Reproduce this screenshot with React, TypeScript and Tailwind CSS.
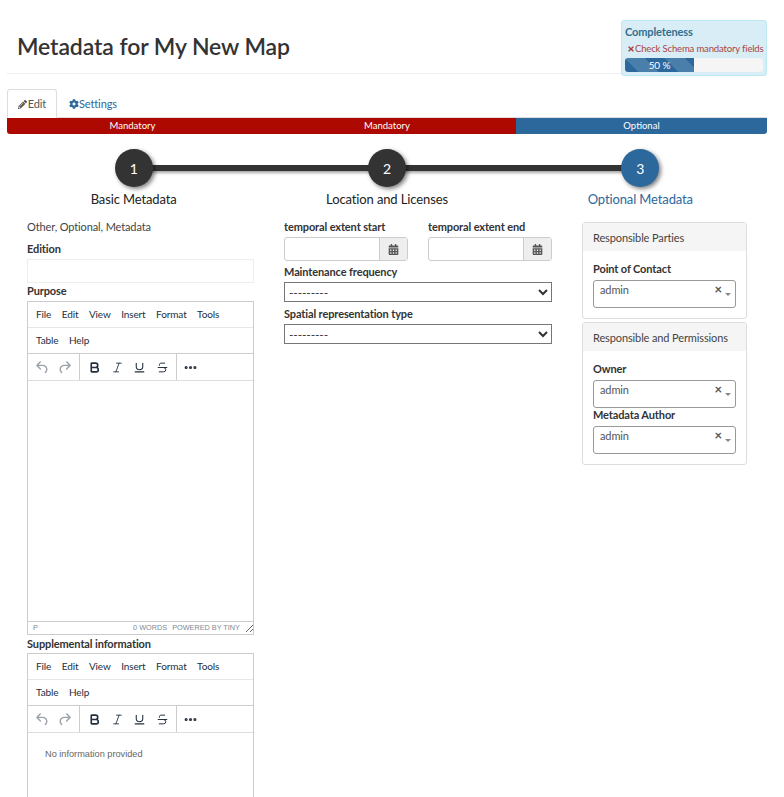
import React from "react";
import { Bold, Italic, Underline, Strikethrough, Ellipsis } from "lucide-react";
import { FaPencilAlt, FaCog, FaCalendarAlt, FaTimes } from "react-icons/fa";

const undoPath =
  "M6.4 8H12c3.7 0 6.2 2 6.8 5.1.6 2.7-.4 5.6-2.3 6.8a1 1 0 0 1-1-1.8c1.1-.6 1.8-2.7 1.4-4.6-.5-2.1-2.1-3.5-4.9-3.5H6.4l3.3 3.3a1 1 0 1 1-1.4 1.4l-5-5a1 1 0 0 1 0-1.4l5-5a1 1 0 0 1 1.4 1.4L6.4 8z";

function Editor({ children, bodyClass }: { children?: React.ReactNode; bodyClass: string }) {
  return (
    <div className="border border-[#ccc] bg-white">
      <div className="flex h-[26px] items-center gap-[10.5px] border-b border-[#e6e6e6] pl-[8px] text-[10px] text-[#222f3e]">
        {["File", "Edit", "View", "Insert", "Format", "Tools"].map((m) => (
          <span key={m}>{m}</span>
        ))}
      </div>
      <div className="flex h-[26px] items-center gap-[10.5px] border-b border-[#ccc] pl-[8px] text-[10px] text-[#222f3e]">
        <span>Table</span>
        <span>Help</span>
      </div>
      <div className="flex h-[27px] items-center border-b border-[#ddd]">
        <div className="flex h-full w-[52px] items-center gap-[5px] border-r border-[#ccc] pl-[6px] text-[#9aa1a9]">
          <svg width="17" height="17" viewBox="0 0 24 24" fill="currentColor">
            <path d={undoPath} />
          </svg>
          <svg width="17" height="17" viewBox="0 0 24 24" fill="currentColor" className="-scale-x-100">
            <path d={undoPath} />
          </svg>
        </div>
        <div className="flex h-full w-[97px] items-center gap-[9.5px] border-r border-[#ccc] pl-[8px] text-[#222f3e]">
          <Bold size={13} strokeWidth={3} />
          <Italic size={13} strokeWidth={1.6} />
          <Underline size={13} strokeWidth={2} />
          <Strikethrough size={13} strokeWidth={1.8} />
        </div>
        <div className="pl-[6px] text-[#222f3e]">
          <Ellipsis size={15} strokeWidth={3} />
        </div>
      </div>
      <div className={bodyClass}>{children}</div>
    </div>
  );
}

function Owner({ label, className }: { label: string; className?: string }) {
  return (
    <div className={className}>
      <div className="mb-[3px] text-[11px] leading-[16px] font-bold tracking-[-0.12px] text-[#333]">{label}</div>
      <div className="relative h-[28px] rounded-[3px] border border-[#999] pl-[6px] text-[11px] leading-[17px] tracking-[-0.12px] text-[#555]">
        admin
        <span className="absolute right-[13px] top-[1px] text-[13px] leading-[15px] font-bold text-[#555]">×</span>
        <span className="absolute right-[4px] top-[12px] h-0 w-0 border-x-[3px] border-t-[3px] border-x-transparent border-t-[#888]" />
      </div>
    </div>
  );
}

function DateInput({ label, className }: { label: string; className: string }) {
  return (
    <div className={className}>
      <div className="mb-[2px] text-[11px] leading-[17px] font-bold tracking-[-0.12px] text-[#333]">{label}</div>
      <div className="flex h-[24px] rounded-[3px] border border-[#ccc]">
        <div className="grow" />
        <div className="flex w-[28px] items-center justify-center border-l border-[#ccc] bg-[#eee] text-[#555]">
          <FaCalendarAlt size={11} />
        </div>
      </div>
    </div>
  );
}

function Dropdown({ label }: { label: string }) {
  return (
    <div>
      <div className="mb-[2px] text-[11px] leading-[17px] font-bold tracking-[-0.12px] text-[#333]">{label}</div>
      <select className="mb-[3px] block h-[20px] w-full border border-[#767676] bg-white text-[12px] text-[#333]">
        <option>---------</option>
      </select>
    </div>
  );
}

export default function App() {
  return (
    <div className="h-[797px] w-[784px] overflow-hidden bg-white px-[7px] font-['Lato','Liberation_Sans',sans-serif] text-[11px] tracking-[-0.12px] text-[#333]">
      <div className="w-[760px]">
        <div className="flex h-[74px] items-start justify-between border-b border-[#eee]">
          <h1 className="pl-[10px] pt-[31px] text-[23px] leading-[30px] font-semibold tracking-[-0.1px] text-[#333]">Metadata for My New Map</h1>
          <div className="mt-[20px] h-[56px] w-[146px] rounded-[3px] border border-[#bce8f1] bg-[#d9edf7] px-[3px] pt-[3px]">
            <div className="text-[11px] leading-[15px] font-bold text-[#31708f]">Completeness</div>
            <div className="mt-[3px] flex items-center pl-[2px] text-[9.5px] leading-[14px] tracking-[-0.15px] whitespace-nowrap text-[#a94442]">
              <FaTimes size={8} className="shrink-0" />
              Check Schema mandatory fields
            </div>
            <div className="mt-[2px] h-[14px] w-[138px] overflow-hidden rounded-[3px] bg-[#f5f5f5]">
              <div className="h-full w-[69px] bg-[#2c689c] bg-[linear-gradient(45deg,rgba(255,255,255,.15)_25%,transparent_25%,transparent_50%,rgba(255,255,255,.15)_50%,rgba(255,255,255,.15)_75%,transparent_75%,transparent)] bg-[length:40px_40px] text-center text-[10px] leading-[14px] text-white">
                50 %
              </div>
            </div>
          </div>
        </div>

        <div className="mt-[15px] flex h-[29px] border-b border-[#ddd]">
          <div className="flex h-[29px] w-[50px] items-center justify-center gap-[1px] rounded-t-[3px] border border-b-white border-[#ddd] bg-white pt-[1px] text-[#555]">
            <FaPencilAlt size={9} />
            Edit
          </div>
          <div className="flex items-center pl-[12px] pt-[2px] text-[#2c689c]">
            <FaCog size={10} />
            Settings
          </div>
        </div>

        <div className="flex h-[16px] overflow-hidden rounded-b-[3px] text-center text-[9.5px] leading-[16px] tracking-normal text-white">
          <div className="w-[251px] bg-[#ad0900]">Mandatory</div>
          <div className="w-[258px] bg-[#ad0900]">Mandatory</div>
          <div className="grow bg-[#2c689c]">Optional</div>
        </div>

        <div className="relative mt-[15px] grid grid-cols-3 text-center text-[13px]">
          <div className="absolute left-[127px] top-[16px] h-[6px] w-[506px] bg-[#333] shadow-[2px_2px_3px_rgba(0,0,0,.35)]" />
          {["Basic Metadata", "Location and Licenses", "Optional Metadata"].map((s, i) => (
            <div key={s} className={`relative flex flex-col items-center ${i === 2 ? "text-[#2c689c]" : "text-[#222]"}`}>
              <div
                className={`flex h-[38px] w-[38px] items-center justify-center rounded-full text-[14px] text-white shadow-[2px_2px_4px_rgba(0,0,0,.5)] ${
                  i === 2 ? "bg-[#2c689c]" : "bg-[#333]"
                }`}
              >
                {i + 1}
              </div>
              <div className="mt-[2px] leading-[20px]">{s}</div>
            </div>
          ))}
        </div>

        <div className="mt-[9px] flex pl-[20px]">
          <div className="w-[227px] shrink-0">
            <div className="leading-[17px] text-[#444]">Other, Optional, Metadata</div>
            <div className="mt-[5px] mb-[2px] leading-[17px] font-bold">Edition</div>
            <div className="h-[24px] border border-[#eee]" />
            <div className="-mt-[1px] mb-[2px] leading-[17px] font-bold">Purpose</div>
            <Editor bodyClass="h-[240px]" />
            <div className="flex h-[13px] items-center justify-between border border-t-0 border-[#ccc] pl-[5px] font-['Liberation_Sans',sans-serif] text-[7.3px] tracking-normal text-[#7f8a97]">
              <span>P</span>
              <span className="flex items-center gap-[5px]">
                <span>0 WORDS</span>
                <span>POWERED BY TINY</span>
                <svg width="8" height="8" viewBox="0 0 8 8" className="stroke-[#666]">
                  <path d="M1 8L8 1M5 8L8 5" />
                </svg>
              </span>
            </div>
            <div className="mb-[1px] leading-[17px] font-bold">Supplemental information</div>
            <Editor bodyClass="h-[80px] pl-[17px] pt-[13px] font-['Liberation_Sans',sans-serif] text-[9.2px] leading-[16px] tracking-normal text-[#666]">
              No information provided
            </Editor>
          </div>

          <div className="ml-[30px] w-[268px] shrink-0">
            <div className="flex justify-between">
              <DateInput label="temporal extent start" className="w-[124px]" />
              <DateInput label="temporal extent end" className="w-[124px]" />
            </div>
            <div className="mt-[2px]">
              <Dropdown label="Maintenance frequency" />
              <Dropdown label="Spatial representation type" />
            </div>
          </div>

          <div className="ml-[30px] w-[165px] shrink-0 pt-[4px]">
            <div className="rounded-[3px] border border-[#ddd]">
              <div className="flex h-[28px] items-center bg-[#f5f5f5] pl-[10px] pt-[2px] text-[#444]">Responsible Parties</div>
              <div className="p-[10px]">
                <Owner label="Point of Contact" />
              </div>
            </div>
            <div className="mt-[3px] rounded-[3px] border border-[#ddd]">
              <div className="flex h-[28px] items-center bg-[#f5f5f5] pl-[10px] pt-[2px] text-[#444]">Responsible and Permissions</div>
              <div className="p-[10px]">
                <Owner label="Owner" />
                <Owner label="Metadata Author" className="-mt-[1px]" />
              </div>
            </div>
          </div>
        </div>
      </div>
    </div>
  );
}
